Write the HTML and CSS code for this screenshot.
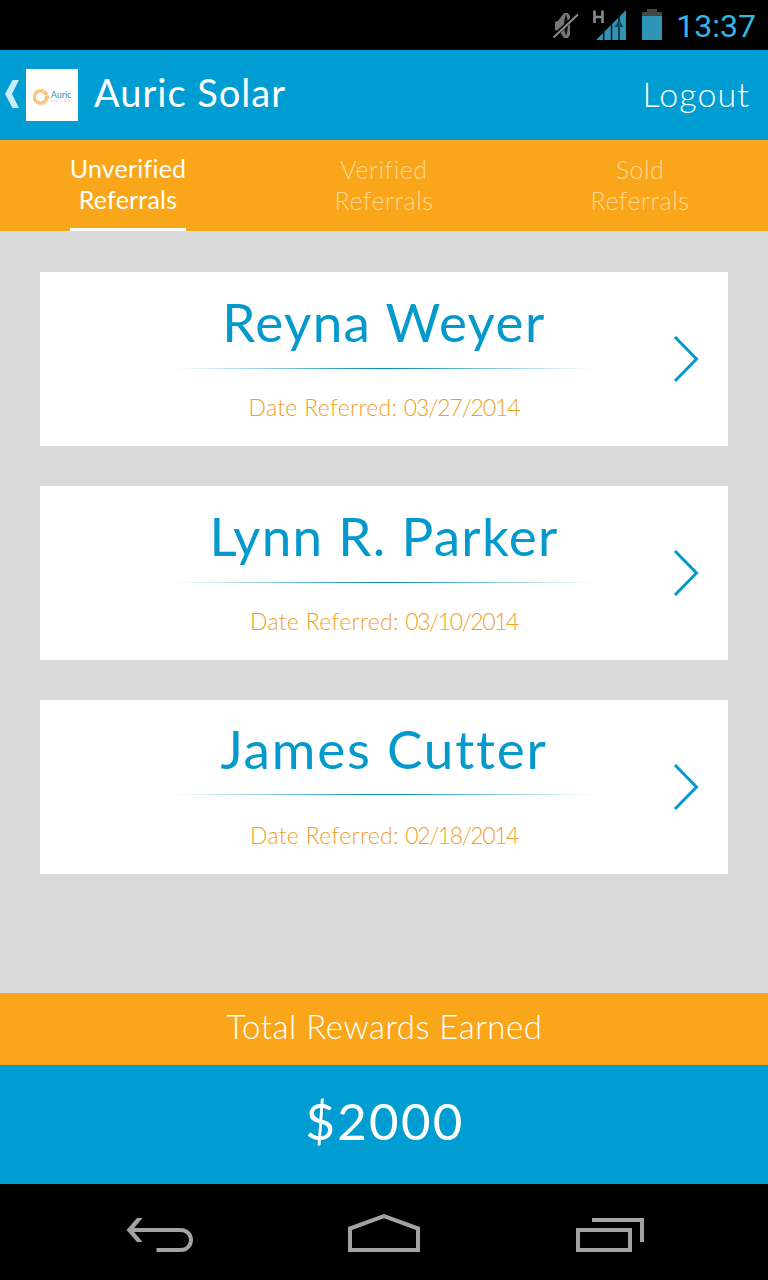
FILE: index.html
```
<!DOCTYPE html>
<html lang="en">
<head>
	<meta charset="UTF-8">
	<title>Auric Solar</title>
	<link rel="stylesheet" href="styles.css">
</head>
<body>
	<div class="status">
		<svg class="statusIcons" width="114" height="34" viewBox="550 8 114 34">
			<!-- muted -->
			<path d="M555 22l3-1 6-8h4l2 3v19l-2 3h-4l-4-6-5-2z" fill="#777"/>
			<path d="M566 14q-4 11 0 22q4-11 0-22" fill="#111"/>
			<path d="M552 38L579 13" stroke="#000" stroke-width="4"/>
			<path d="M553.500 37.500L578 14.500" stroke="#8c8c8c" stroke-width="2"/>
			<!-- signal -->
			<path d="M594.500 10.500V23M602.500 10.500V23M594.500 17H602.500" stroke="#8a8a8a" stroke-width="2.600" fill="none"/>
			<path d="M596 40L626 10V40z" fill="#3094b8"/>
			<path d="M603.700 30V40M611.500 22V40M619 15V40" stroke="#02141c" stroke-width="1.500"/>
			<path d="M619 20l4.500 7h-9z" fill="#0c4a60"/>
			<!-- battery -->
			<path d="M647 9h10v3h5v4h-20v-4h5z" fill="#454545"/>
			<path d="M642 16h20v24h-20z" fill="#3094b8"/>
		</svg>
		<span class="clock">13:37</span>
	</div>

	<div class="header">
		<svg class="back" width="14" height="28" viewBox="0 0 14 28"><path d="M7.500 0H14L7 14l7 14H7.500L0 14z"/></svg>
		<div class="logo">
			<svg width="18" height="18" viewBox="0 0 18 18">
				<circle class="sun" cx="8.500" cy="9" r="6"/>
				<circle class="sunEdge" cx="9" cy="9" r="7.500"/>
			</svg>
			<div class="logoText"><b>Auric</b><i>SOLAR</i></div>
		</div>
		<h1>Auric Solar</h1>
		<a class="logout">Logout</a>
	</div>

	<ul class="tabs">
		<li class="active"><span>Unverified<br>Referrals</span></li>
		<li><span>Verified<br>Referrals</span></li>
		<li><span>Sold<br>Referrals</span></li>
	</ul>

	<div class="list">
		<div class="card first">
			<h2>Reyna Weyer</h2>
			<div class="line"></div>
			<p>Date Referred: <span>03/27/2014</span></p>
			<svg class="arrow" width="26" height="48" viewBox="0 0 26 48"><path d="M2 2L23.500 24L2 46"/></svg>
		</div>
		<div class="card">
			<h2>Lynn R. Parker</h2>
			<div class="line"></div>
			<p>Date Referred: <span>03/10/2014</span></p>
			<svg class="arrow" width="26" height="48" viewBox="0 0 26 48"><path d="M2 2L23.500 24L2 46"/></svg>
		</div>
		<div class="card last">
			<h2>James Cutter</h2>
			<div class="line"></div>
			<p>Date Referred: <span>02/18/2014</span></p>
			<svg class="arrow" width="26" height="48" viewBox="0 0 26 48"><path d="M2 2L23.500 24L2 46"/></svg>
		</div>
	</div>

	<div class="rewards">Total Rewards Earned</div>
	<div class="amount">$2000</div>

	<div class="nav">
		<svg width="68" height="40" viewBox="126 1213 68 40">
			<path class="head" d="M137 1218h5.500l-10 12l10 12H137l-10.500-12z"/>
			<path d="M130 1230h51a10 10 0 0 1 0 20H156.500"/>
		</svg>
		<svg class="home" width="72" height="40" viewBox="348 1213 72 40">
			<path d="M350 1250v-21.500l34-12.300l34 12.300V1250z"/>
		</svg>
		<svg width="68" height="40" viewBox="576 1213 68 40">
			<path d="M578 1230h52v20h-52zM592 1220h50v22"/>
		</svg>
	</div>
</body>
</html>
```
FILE: styles.css
```
* {margin: 0;padding: 0;box-sizing: border-box;}
body {width: 768px;height: 1280px;display: flex;flex-direction: column;overflow: hidden;background: #dadada;font-family: Lato, "Open Sans", sans-serif;color: #fff;}
ul {list-style: none;}
svg {display: block;flex: none;}

.status {height: 50px;background: #000;display: flex;justify-content: flex-end;align-items: center;padding-right: 12px;}
.statusIcons {margin-right: 12px;}
.clock {font: 400 32px/50px Roboto, sans-serif;color: #35b5e5;padding-top: 2px;}

.header {height: 90px;background: #009dd2;display: flex;align-items: center;padding: 0 18px 0 5px;}
.back {fill: #c9edfa;margin-bottom: 2px;}
.logo {width: 52px;height: 52px;margin: 0 16px 0 7px;background: #fff;display: flex;align-items: center;justify-content: center;padding-top: 3px;}
.logo .sun {fill: none;stroke: #f9bd74;stroke-width: 3;stroke-dasharray: 4 .4;}
.logo .sunEdge {fill: none;stroke: #fbc583;stroke-width: 1.500;stroke-dasharray: 2 1;}
.logoText {margin-left: 1px;}
.logoText b {display: block;font: 400 9px/9px Lato, sans-serif;color: #2b95c4;}
.logoText i {display: block;font: 400 4px/4px Lato, sans-serif;color: #f3b98a;letter-spacing: 1.8px;}
.header h1 {font-size: 38px;font-weight: 400;letter-spacing: 1px;padding-bottom: 6px;}
.logout {margin-left: auto;font-size: 34px;font-weight: 300;letter-spacing: 1.1px;padding-bottom: 4px;}

.tabs {height: 91px;background: #faa61a;display: flex;}
.tabs li {flex: 1;display: flex;justify-content: center;font-size: 25px;line-height: 31px;font-weight: 300;letter-spacing: .55px;text-align: center;color: #fed795;padding-top: 14px;}
.tabs .active {color: #fff;font-weight: 400;letter-spacing: .2px;padding-top: 13px;}
.tabs .active span {border-bottom: 3px solid #fff;}

.list {flex: 1;padding: 41px 40px 0;display: flex;flex-direction: column;gap: 40px;}
.card {height: 174px;background: #fff;position: relative;display: flex;flex-direction: column;align-items: center;}
.card h2 {height: 96px;font-size: 53px;line-height: 100px;font-weight: 400;letter-spacing: 1.3px;color: #0499cd;}
.card .line {width: 420px;height: 1px;background: linear-gradient(90deg, rgba(0,140,190,0), #0088bb 50%, rgba(0,140,190,0));}
.card p {font-size: 23px;line-height: 30px;font-weight: 300;letter-spacing: .3px;color: #f1a01e;margin-top: 23px;}
.card p span {letter-spacing: -1.4px;}
.first h2 {letter-spacing: 1.4px;}
.first p span {letter-spacing: -1.1px;}
.last h2 {height: 94px;line-height: 97px;letter-spacing: 1.8px;}
.last p {margin-top: 25px;}
.arrow {position: absolute;right: 29px;top: 63px;}
.arrow path {fill: none;stroke: #0499cd;stroke-width: 3;}

.rewards {height: 72px;background: #faa61a;font-size: 33px;line-height: 66px;font-weight: 300;letter-spacing: .5px;padding-left: 1px;text-align: center;}
.amount {height: 119px;background: #009dd2;font-size: 51px;line-height: 111px;letter-spacing: 2.2px;padding-left: 2px;text-align: center;}

.nav {height: 96px;background: #000;display: flex;justify-content: space-between;align-items: center;padding: 2px 124px 0 126px;}
.nav path {fill: none;stroke: #a3a3a3;stroke-width: 4;}
.nav .head {fill: #a3a3a3;stroke: none;}
.home {position: relative;left: -1px;}
```
